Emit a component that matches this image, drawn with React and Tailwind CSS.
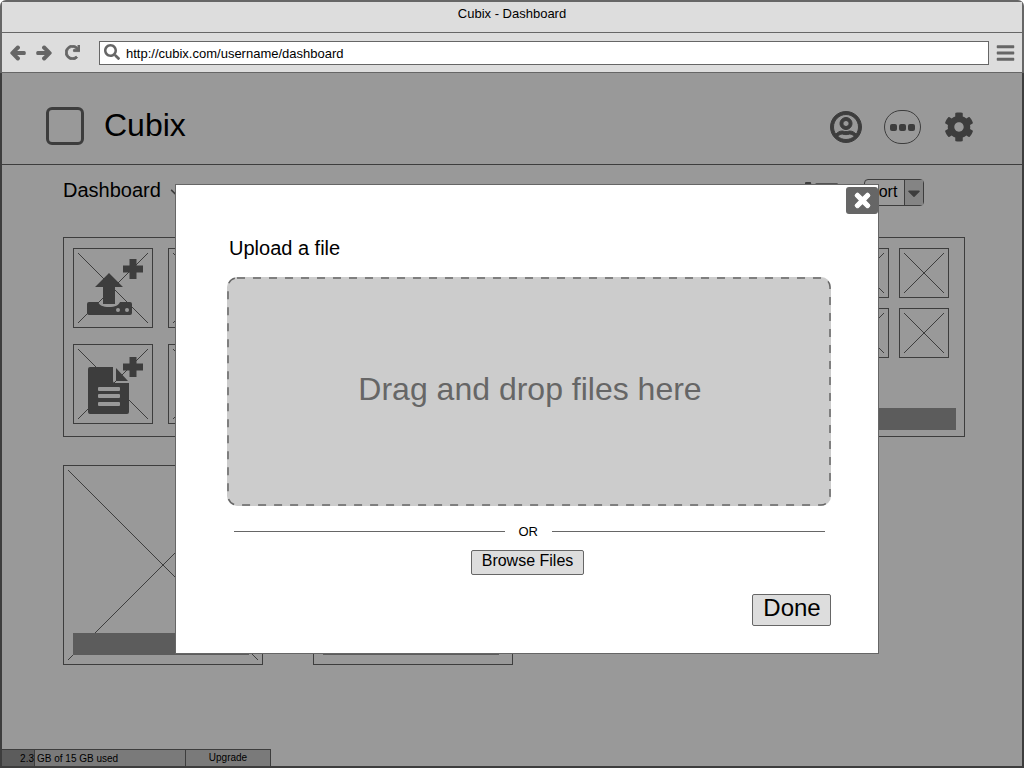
import React from 'react';
import {
  FaArrowLeft,
  FaArrowRight,
  FaBars,
  FaCaretDown,
  FaChevronDown,
  FaCog,
  FaList,
  FaRedo,
  FaRegUserCircle,
  FaSearch,
  FaTimes,
} from 'react-icons/fa';

// Crossed box used for every image placeholder
const Placeholder = ({ className = '', children }) => (
  <div className={`relative border border-[#666] shrink-0 ${className}`}>
    <svg className="absolute inset-[4px] h-[calc(100%-8px)] w-[calc(100%-8px)]" viewBox="0 0 100 100" preserveAspectRatio="none">
      <line x1="0" y1="0" x2="100" y2="100" stroke="#666" strokeWidth="1" vectorEffect="non-scaling-stroke" />
      <line x1="100" y1="0" x2="0" y2="100" stroke="#666" strokeWidth="1" vectorEffect="non-scaling-stroke" />
    </svg>
    {children}
  </div>
);

const Plus = ({ cx, cy }) => (
  <path d={`M${cx - 3.5} ${cy - 10}h7v6.5h6.5v7h-6.5v6.5h-7v-6.5h-6.5v-7h6.5z`} />
);

const UploadIcon = () => (
  <svg className="absolute -left-px -top-px h-[80px] w-[80px]" viewBox="0 0 80 80" fill="#666">
    <path d="M36 25L50 39h-8v17H30V39h-8z" />
    <path d="M16 54h9c1 3 5 5 11 5s10-2 11-5h10a2 2 0 0 1 2 2v9a2 2 0 0 1-2 2H16a2 2 0 0 1-2-2v-9a2 2 0 0 1 2-2z" />
    <circle cx="45" cy="62" r="2" fill="#fff" />
    <circle cx="54" cy="62" r="2" fill="#fff" />
    <Plus cx={60} cy={21} />
  </svg>
);

const FileIcon = () => (
  <svg className="absolute -left-px -top-px h-[80px] w-[80px]" viewBox="0 0 80 80" fill="#666">
    <path d="M15 25a2 2 0 0 1 2-2h23v14a2 2 0 0 0 2 2h14v29a2 2 0 0 1-2 2H17a2 2 0 0 1-2-2z" />
    <path d="M43 24l12 13H43z" />
    <g fill="#fff">
      <rect x="25" y="43" width="22" height="4" rx="1" />
      <rect x="25" y="50" width="22" height="4" rx="1" />
      <rect x="25" y="58" width="22" height="4" rx="1" />
    </g>
    <Plus cx={60} cy={23} />
  </svg>
);

export default function App() {
  return (
    <div className="relative h-[768px] w-[1024px] overflow-hidden bg-white font-['Liberation_Sans',Arial,sans-serif] text-black">
      <div className="flex h-full flex-col rounded-t-md border-2 border-[#666]">
        {/* Browser chrome */}
        <div className="flex h-[30px] items-center justify-center bg-[#ddd] pb-[6px] text-[13px]">Cubix - Dashboard</div>
        <div className="flex h-[41px] items-center border-y border-[#666] bg-[#ddd] pl-[8px] pr-[7px] text-[#666]">
          <FaArrowLeft className="h-[16px] w-[16px]" stroke="currentColor" strokeWidth={50} />
          <FaArrowRight className="ml-[10px] h-[16px] w-[16px]" stroke="currentColor" strokeWidth={50} />
          <FaRedo className="ml-[13px] h-[15px] w-[15px]" stroke="currentColor" strokeWidth={30} />
          <div className="ml-[19px] flex h-[24px] flex-1 items-center border border-[#666] bg-white pl-[4px] pt-[2px] text-[13px] text-black">
            <FaSearch className="h-[16px] w-[16px] -translate-y-[2px] text-[#666]" />
            <span className="ml-[6px]">http://cubix.com/username/dashboard</span>
          </div>
          <FaBars className="ml-[7px] h-[20px] w-[19px]" />
        </div>

        {/* App header */}
        <div className="flex h-[92px] shrink-0 items-center border-b border-[#666] pl-[44px] pr-[48px] pt-[13px]">
          <div className="mt-[1px] h-[38px] w-[38px] rounded-md border-[3px] border-[#666]" />
          <span className="ml-[20px] text-[32px] leading-[38px]">Cubix</span>
          <div className="ml-auto mt-[4px] flex items-center text-[#666]">
            <FaRegUserCircle className="h-[32px] w-[32px]" stroke="currentColor" strokeWidth={16} />
            <div className="ml-[22px] flex h-[34px] w-[37px] items-center justify-center gap-[2px] rounded-full border border-[#666]">
              <div className="h-[7px] w-[7px] rounded-[2px] bg-[#666]" />
              <div className="h-[7px] w-[7px] rounded-[2px] bg-[#666]" />
              <div className="h-[7px] w-[7px] rounded-[2px] bg-[#666]" />
            </div>
            <FaCog className="ml-[23px] h-[30px] w-[30px]" />
          </div>
        </div>

        {/* Sub header */}
        <div className="flex h-[72px] shrink-0 items-start pl-[61px] pr-[98px] pt-[10px]">
          <span className="text-[20px]">Dashboard</span>
          <FaChevronDown className="ml-[9px] mt-[12px] h-[10px] w-[10px] text-[#666]" />
          <FaList className="ml-auto mt-[4px] h-[33px] w-[33px] text-[#666]" />
          <div className="ml-[26px] mt-[4px] flex h-[27px] w-[60px] rounded-sm border border-[#666] text-[16px]">
            <span className="flex-1 pl-[3px]">Sort</span>
            <div className="flex w-[19px] items-center justify-center border-l border-[#666] bg-[#ddd]">
              <FaCaretDown className="h-[20px] w-[20px] text-[#666]" />
            </div>
          </div>
        </div>

        {/* Tiles panel */}
        <div className="ml-[61px] flex h-[200px] w-[902px] shrink-0 border border-[#666] py-[10px] pl-[9px] pr-[15px]">
          <div className="flex flex-col gap-[16px]">
            <Placeholder className="h-[80px] w-[80px]">
              <UploadIcon />
            </Placeholder>
            <Placeholder className="h-[80px] w-[80px]">
              <FileIcon />
            </Placeholder>
          </div>
          <div className="ml-[15px] flex flex-col gap-[16px]">
            <Placeholder className="h-[80px] w-[80px]" />
            <Placeholder className="h-[80px] w-[80px]" />
          </div>
          <div className="ml-auto flex flex-col">
            <div className="grid grid-cols-2 gap-x-[10px] gap-y-[10px]">
              <Placeholder className="h-[50px] w-[50px]" />
              <Placeholder className="h-[50px] w-[50px]" />
              <Placeholder className="h-[50px] w-[50px]" />
              <Placeholder className="h-[50px] w-[50px]" />
            </div>
            <div className="mt-auto -mr-[7px] -mb-[4px] h-[22px] bg-[#999]" />
          </div>
        </div>

        {/* Big cards */}
        <div className="ml-[61px] mt-[28px] flex gap-[50px]">
          <Placeholder className="flex h-[200px] w-[200px] flex-col justify-end pb-[9px] pl-[9px] pr-[13px]">
            <div className="relative h-[22px] bg-[#999]" />
          </Placeholder>
          <div className="flex h-[200px] w-[200px] flex-col justify-end border border-[#666] pb-[9px] pl-[9px] pr-[13px]">
            <div className="h-[22px] bg-[#999]" />
          </div>
        </div>

        {/* Storage footer */}
        <div className="mt-auto flex h-[17px] text-[10px] leading-[12px]">
          <div className="flex w-[184px] items-center border-t border-r border-[#666] bg-[#ccc]">
            <div className="flex h-full w-[33px] items-center justify-end border-r border-[#666] bg-[#999] pt-[2px]">2.3</div>
            <span className="ml-[2px] pt-[2px]">GB of 15 GB used</span>
          </div>
          <div className="flex w-[85px] items-center justify-center border-t border-r border-[#666] bg-[#ccc]">Upgrade</div>
        </div>
      </div>

      {/* Modal layer */}
      <div className="absolute inset-x-0 bottom-0 top-[73px] bg-black/40" />
      <div className="absolute left-[175px] top-[184px] flex h-[470px] w-[704px] flex-col border border-[#666] bg-white pl-[51px] pr-[47px] pt-[52px]">
        <button className="absolute right-0 top-[2px] flex h-[27px] w-[32px] items-center justify-center rounded-[3px] bg-[#666] text-white">
          <FaTimes className="h-[21px] w-[21px]" stroke="currentColor" strokeWidth={30} />
        </button>
        <div className="pl-[2px] text-[20px] leading-[22px]">Upload a file</div>
        <div className="relative mt-[18px] flex h-[229px] items-center justify-center rounded-[10px] bg-[#ccc] pb-[5px] pl-[2px] text-[32px] text-[#666]">
          <svg className="absolute inset-0 h-full w-full" fill="none">
            <rect x="1" y="1" width="602" height="227" rx="9" stroke="#666" strokeWidth="1.5" strokeDasharray="8 8" />
          </svg>
          <span className="relative">Drag and drop files here</span>
        </div>
        <div className="mt-[16px] flex items-center pl-[7px] pr-[6px] text-[13px]">
          <div className="h-px flex-1 bg-[#666]" />
          <span className="mx-[14px]">OR</span>
          <div className="h-px w-[273px] bg-[#666]" />
        </div>
        <button className="mt-[8px] h-[25px] w-[113px] -translate-x-[2px] self-center rounded-[2px] border border-[#666] bg-[#ddd] pb-[4px] pl-[1px] text-[16px] leading-[20px]">
          Browse Files
        </button>
        <button className="mt-[19px] h-[32px] w-[79px] self-end rounded-[2px] border border-[#666] bg-[#ddd] pb-[4px] pl-[1px] text-[24px] leading-[26px]">
          Done
        </button>
      </div>
    </div>
  );
}
